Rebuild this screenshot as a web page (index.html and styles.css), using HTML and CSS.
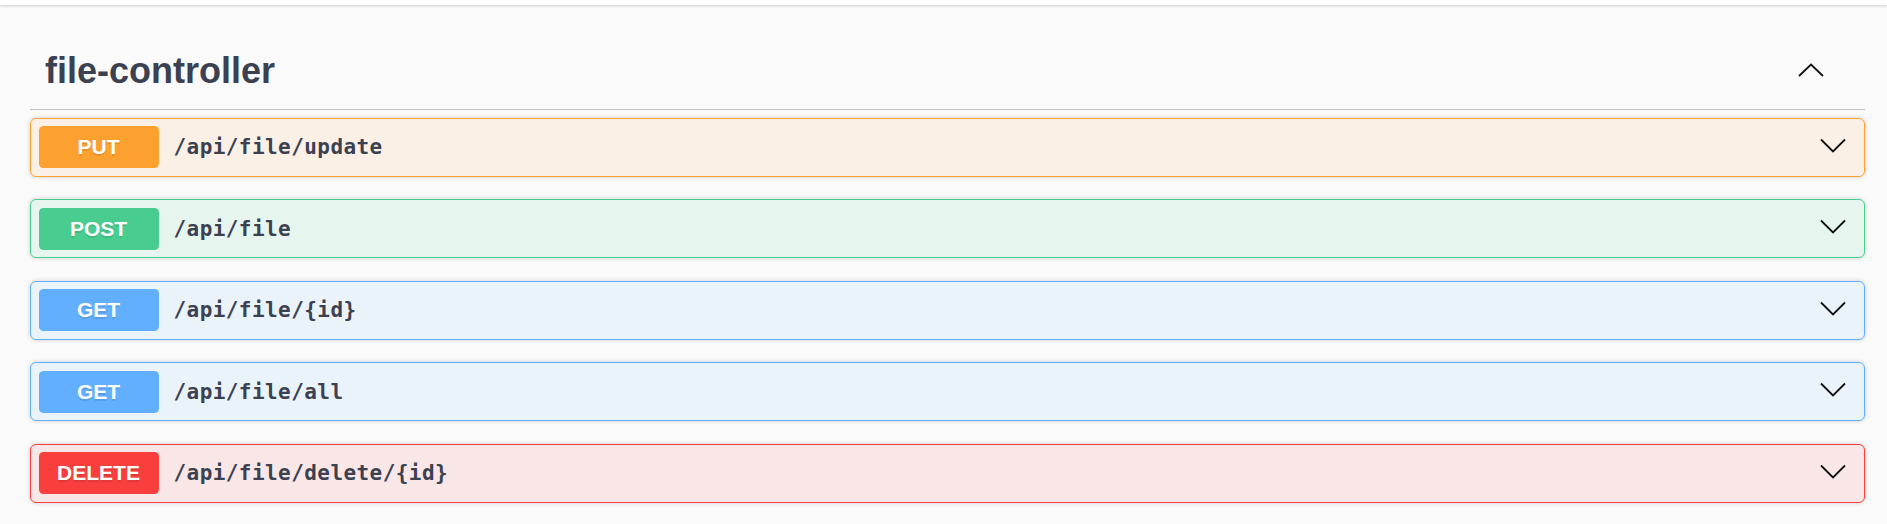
FILE: index.html
```html
<!DOCTYPE html>
<html>
<head>
<meta charset="utf-8">
<link rel="stylesheet" href="styles.css">
</head>
<body>
<div class="topbar"></div>
<div class="section">
  <div class="tag">
    <h3 class="tag-title">file-controller</h3>
    <svg class="tag-arrow" width="26" height="14" viewBox="0 0 26 14"><polyline points="1,13 13,1.5 25,13" fill="none" stroke="#111" stroke-width="1.8"/></svg>
  </div>
  <div class="opblock put">
    <div class="summary">
      <span class="method">PUT</span>
      <span class="path">/api/file/update</span>
      <svg class="arrow" width="26" height="15" viewBox="0 0 26 15"><polyline points="1,1.5 13,13.5 25,1.5" fill="none" stroke="#111" stroke-width="1.8"/></svg>
    </div>
  </div>
  <div class="opblock post">
    <div class="summary">
      <span class="method">POST</span>
      <span class="path">/api/file</span>
      <svg class="arrow" width="26" height="15" viewBox="0 0 26 15"><polyline points="1,1.5 13,13.5 25,1.5" fill="none" stroke="#111" stroke-width="1.8"/></svg>
    </div>
  </div>
  <div class="opblock get">
    <div class="summary">
      <span class="method">GET</span>
      <span class="path">/api/file/{id}</span>
      <svg class="arrow" width="26" height="15" viewBox="0 0 26 15"><polyline points="1,1.5 13,13.5 25,1.5" fill="none" stroke="#111" stroke-width="1.8"/></svg>
    </div>
  </div>
  <div class="opblock get">
    <div class="summary">
      <span class="method">GET</span>
      <span class="path">/api/file/all</span>
      <svg class="arrow" width="26" height="15" viewBox="0 0 26 15"><polyline points="1,1.5 13,13.5 25,1.5" fill="none" stroke="#111" stroke-width="1.8"/></svg>
    </div>
  </div>
  <div class="opblock delete">
    <div class="summary">
      <span class="method">DELETE</span>
      <span class="path">/api/file/delete/{id}</span>
      <svg class="arrow" width="26" height="15" viewBox="0 0 26 15"><polyline points="1,1.5 13,13.5 25,1.5" fill="none" stroke="#111" stroke-width="1.8"/></svg>
    </div>
  </div>
</div>
</body>
</html>
```
FILE: styles.css
```css
html, body {
  margin: 0;
  padding: 0;
  background: #fafafa;
  font-family: "Liberation Sans", Arial, sans-serif;
  color: #3b4151;
}
.topbar {
  height: 5px;
  background: #fff;
  box-shadow: 0 1px 3px rgba(0, 0, 0, 0.18);
  position: relative;
}
.section {
  padding: 25px 22px 0 30px;
}
.tag {
  display: flex;
  align-items: center;
  padding: 20px 41px 18px 15px;
  border-bottom: 1px solid rgba(59, 65, 81, 0.3);
  margin-bottom: 7.5px;
}
.tag-title {
  margin: 0;
  font-size: 36px;
  line-height: 41px;
  font-weight: 700;
  color: #3b4151;
  flex: 1;
}
.tag-arrow {
  display: block;
  margin-top: -1px;
}
.opblock {
  border: 1px solid #000;
  border-radius: 6px;
  margin-bottom: 22.5px;
  box-shadow: 0 0 4px rgba(0, 0, 0, 0.19);
}
.summary {
  display: flex;
  align-items: center;
  padding: 7.5px;
}
.method {
  width: 120px;
  height: 42px;
  border-radius: 4.5px;
  display: flex;
  align-items: center;
  justify-content: center;
  color: #fff;
  font-size: 21px;
  font-weight: 700;
  text-shadow: 0 1.5px 0 rgba(0, 0, 0, 0.1);
}
.path {
  margin-left: 15px;
  font-family: "DejaVu Sans Mono", "Liberation Mono", monospace;
  font-weight: 700;
  font-size: 21px;
  letter-spacing: 0.43px;
  color: #3b4151;
  flex: 1;
}
.arrow {
  display: block;
  margin-right: 11px;
  margin-bottom: 4px;
}
.put { border-color: #fca130; background: rgba(252, 161, 48, 0.1); }
.put .method { background: #fca130; }
.post { border-color: #49cc90; background: rgba(73, 204, 144, 0.1); }
.post .method { background: #49cc90; }
.get { border-color: #61affe; background: rgba(97, 175, 254, 0.1); }
.get .method { background: #61affe; }
.delete { border-color: #f93e3e; background: rgba(249, 62, 62, 0.1); }
.delete .method { background: #f93e3e; }
```
